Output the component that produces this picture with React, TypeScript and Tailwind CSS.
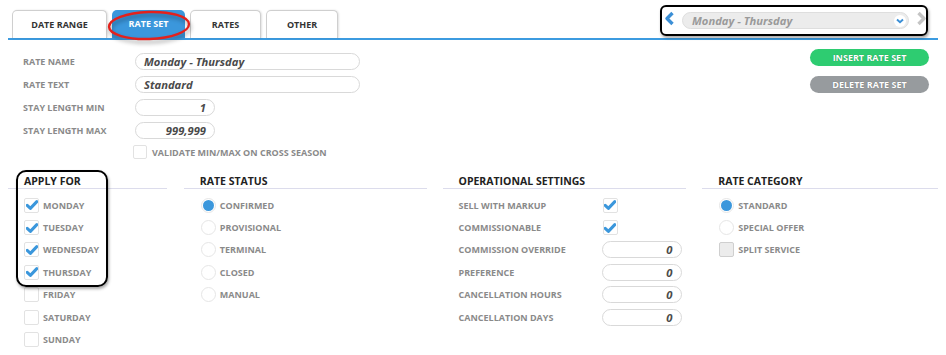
import React from "react";

const Check = () => (
  <svg width="12" height="10" viewBox="0 0 12 10">
    <path d="M1.2 5.4 L4.4 8.4 L10.8 1.6" fill="none" stroke="#3b97dc" strokeWidth="3" strokeLinejoin="round" strokeLinecap="round" />
  </svg>
);

const Box = ({ checked, gray }: { checked?: boolean; gray?: boolean }) => (
  <div
    className={`w-[15px] h-[15px] shrink-0 rounded-[2px] border flex items-center justify-center ${
      gray ? "bg-[#ececec] border-[#cfcfcf]" : "bg-white border-[#e2e2e2]"
    }`}
  >
    {checked && <Check />}
  </div>
);

const Radio = ({ on }: { on?: boolean }) => (
  <div className="w-[15px] h-[15px] shrink-0 rounded-full border border-[#e6e6e6] bg-white flex items-center justify-center">
    {on && <div className="w-[11px] h-[11px] rounded-full bg-[#3b97dc]" />}
  </div>
);

const Pill = ({ value, w, right }: { value: string; w: string; right?: boolean }) => (
  <div
    className={`${w} h-[17px] rounded-full border border-[#d9d9d9] bg-white flex items-center px-[8px] text-[11.2px] font-bold italic text-[#4a4a4a] leading-none ${
      right ? "justify-end" : ""
    }`}
  >
    {value}
  </div>
);

const Header = ({ title }: { title: string }) => (
  <div className="h-[22px] pt-[7px] pl-[16px] leading-[14px] border-b border-[#dcdcec] text-[10.5px] font-bold text-[#222]">
    {title}
  </div>
);

const Label = ({ children, w }: { children: React.ReactNode; w?: string }) => (
  <span className={`text-[9px] font-bold text-[#8a8a8a] leading-none ${w ?? ""}`}>{children}</span>
);

const tabs = [
  { name: "DATE RANGE", w: "w-[95px]" },
  { name: "RATE SET", w: "w-[73px]", active: true },
  { name: "RATES", w: "w-[71px]" },
  { name: "OTHER", w: "w-[72px]" },
];

const days = [
  ["MONDAY", true],
  ["TUESDAY", true],
  ["WEDNESDAY", true],
  ["THURSDAY", true],
  ["FRIDAY", false],
  ["SATURDAY", false],
  ["SUNDAY", false],
] as const;

const statuses = ["CONFIRMED", "PROVISIONAL", "TERMINAL", "CLOSED", "MANUAL"];

const formRows = [
  { label: "RATE NAME", value: "Monday - Thursday", w: "w-[225px]" },
  { label: "RATE TEXT", value: "Standard", w: "w-[225px]" },
  { label: "STAY LENGTH MIN", value: "1", w: "w-[80px]", right: true },
  { label: "STAY LENGTH MAX", value: "999,999", w: "w-[80px]", right: true },
];

const opInputs = ["COMMISSION OVERRIDE", "PREFERENCE", "CANCELLATION HOURS", "CANCELLATION DAYS"];

export default function App() {
  return (
    <div className="relative w-[946px] h-[355px] bg-white overflow-hidden font-['Open_Sans',sans-serif]">
      <div className="px-[8px]">
        {/* tab strip */}
        <div className="mt-[10px] h-[30px] flex justify-between border-b-2 border-[#3c9be0]">
          <div className="flex items-end gap-[5px] pl-[4px]">
            {tabs.map((t) => (
              <div
                key={t.name}
                className={`${t.w} h-[28px] rounded-t-[5px] flex items-center justify-center text-[9px] font-bold ${
                  t.active
                    ? "bg-[#3b97dc] text-white"
                    : "bg-white text-[#333] border border-b-0 border-[#cfcfcf] shadow-[1px_0_2px_rgba(0,0,0,0.12)]"
                }`}
              >
                {t.name}
              </div>
            ))}
          </div>
          <div className="flex items-start pt-[1px] pr-[11px] gap-[7px]">
            <svg width="11" height="15" viewBox="0 0 11 15">
              <path d="M8.5 2 L3 7.5 L8.5 13" fill="none" stroke="#3b8fd6" strokeWidth="3.4" strokeLinejoin="round" />
            </svg>
            <div className="mt-[1px] w-[227px] h-[17px] rounded-full bg-[#ececec] border border-[#dedede] flex items-center justify-between pl-[9px] pr-[2px]">
              <span className="text-[11.2px] font-bold italic text-[#9a9a9a] leading-none">Monday - Thursday</span>
              <div className="w-[12px] h-[12px] rounded-full bg-white flex items-center justify-center">
                <svg width="8" height="6" viewBox="0 0 8 6">
                  <path d="M1 1.5 L4 4.3 L7 1.5" fill="none" stroke="#3b8fd6" strokeWidth="1.9" />
                </svg>
              </div>
            </div>
            <svg width="11" height="15" viewBox="0 0 11 15">
              <path d="M2.5 2 L8 7.5 L2.5 13" fill="none" stroke="#c4c4c4" strokeWidth="3.4" strokeLinejoin="round" />
            </svg>
          </div>
        </div>

        {/* rate form */}
        <div className="flex justify-between">
          <div className="mt-[13px] pl-[15px] flex flex-col gap-[6px]">
            {formRows.map((r) => (
              <div key={r.label} className="flex items-center h-[17px]">
                <Label w="w-[112px]">{r.label}</Label>
                <Pill value={r.value} w={r.w} right={r.right} />
              </div>
            ))}
            <div className="flex items-center h-[14px] pl-[110px] gap-[5px]">
              <div className="w-[14px] h-[14px] rounded-[2px] border border-[#e2e2e2] bg-white" />
              <Label>VALIDATE MIN/MAX ON CROSS SEASON</Label>
            </div>
          </div>
          <div className="mt-[9px] pr-[9px] flex flex-col gap-[10px]">
            <div className="w-[119px] h-[17px] rounded-full bg-[#2ecc71] flex items-center justify-center text-[9px] font-bold text-white [text-shadow:0_0_1px_rgba(0,0,0,0.35)]">
              INSERT RATE SET
            </div>
            <div className="w-[119px] h-[17px] rounded-full bg-[#979b9e] flex items-center justify-center text-[9px] font-bold text-white [text-shadow:0_0_1px_rgba(0,0,0,0.35)]">
              DELETE RATE SET
            </div>
          </div>
        </div>

        {/* sections */}
        <div className="mt-[8px] flex">
          <div className="w-[159px]">
            <Header title="APPLY FOR" />
            <div className="pt-[5px] pl-[16px]">
              {days.map(([d, on]) => (
                <div key={d} className="h-[22.4px] flex items-center gap-[4px]">
                  <Box checked={on} />
                  <Label>{d}</Label>
                </div>
              ))}
            </div>
          </div>
          <div className="w-[243px] ml-[17px]">
            <Header title="RATE STATUS" />
            <div className="pt-[5px] pl-[17px]">
              {statuses.map((s, i) => (
                <div key={s} className="h-[22.4px] flex items-center gap-[4px]">
                  <Radio on={i === 0} />
                  <Label>{s}</Label>
                </div>
              ))}
            </div>
          </div>
          <div className="w-[244px] ml-[16px]">
            <Header title="OPERATIONAL SETTINGS" />
            <div className="pt-[5px] pl-[16px]">
              {["SELL WITH MARKUP", "COMMISSIONABLE"].map((s) => (
                <div key={s} className="h-[22.4px] flex items-center">
                  <Label w="w-[144px]">{s}</Label>
                  <Box checked />
                </div>
              ))}
              {opInputs.map((s) => (
                <div key={s} className="h-[22.4px] flex items-center">
                  <Label w="w-[143px]">{s}</Label>
                  <Pill value="0" w="w-[80px]" right />
                </div>
              ))}
            </div>
          </div>
          <div className="w-[236px] ml-[16px]">
            <Header title="RATE CATEGORY" />
            <div className="pt-[5px] pl-[17px]">
              <div className="h-[22.4px] flex items-center gap-[4px]">
                <Radio on />
                <Label>STANDARD</Label>
              </div>
              <div className="h-[22.4px] flex items-center gap-[4px]">
                <Radio />
                <Label>SPECIAL OFFER</Label>
              </div>
              <div className="h-[22.4px] flex items-center gap-[4px]">
                <Box gray />
                <Label>SPLIT SERVICE</Label>
              </div>
            </div>
          </div>
        </div>
      </div>

      {/* annotation overlays */}
      <svg
        className="absolute left-[104px] top-[6px] [filter:drop-shadow(1px_3px_2px_rgba(0,0,0,0.35))]"
        width="92"
        height="40"
        viewBox="0 0 92 40"
      >
        <ellipse cx="45" cy="19.5" rx="40" ry="13.5" transform="rotate(-2 45 19.5)" fill="none" stroke="#e3211c" strokeWidth="2.4" />
      </svg>
      <div className="absolute left-[660px] top-[5px] w-[268px] h-[31px] rounded-[6px] border-2 border-black shadow-[1px_2px_3px_rgba(0,0,0,0.35)]" />
      <div className="absolute left-[16px] top-[170px] w-[92px] h-[117px] rounded-[10px] border-2 border-black shadow-[1px_2px_3px_rgba(0,0,0,0.35)]" />
    </div>
  );
}
